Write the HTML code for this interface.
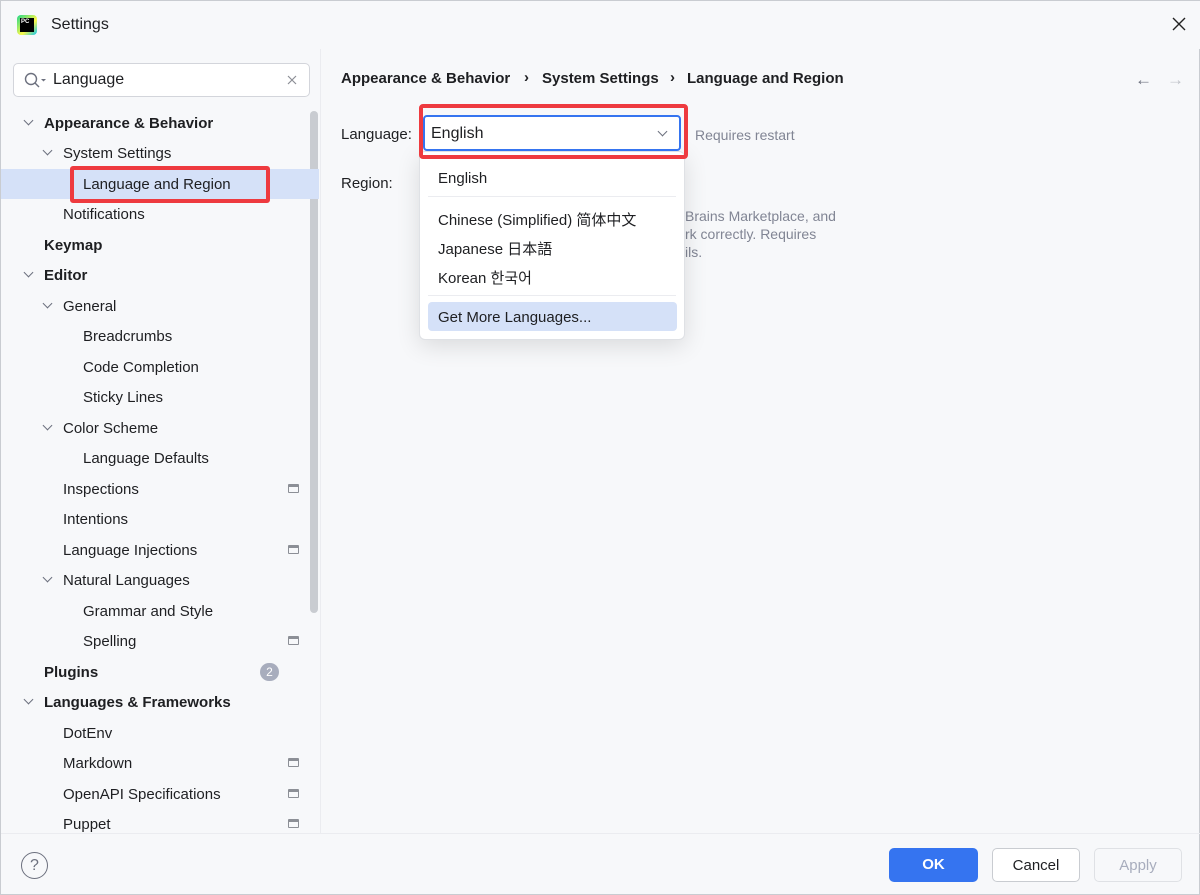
<!DOCTYPE html>
<html><head><style>
*{box-sizing:border-box;margin:0;padding:0}
body{width:1200px;height:895px;background:#f7f8fa;font-family:"Liberation Sans","Noto Sans CJK SC",sans-serif;font-size:15px;color:#1e1f22;position:relative;overflow:hidden;border:1px solid #c9ccd1}
.abs{position:absolute;white-space:nowrap}
.row{position:absolute;left:0;width:318px;height:30px;line-height:30px;white-space:nowrap}
.b{font-weight:bold}
.chev{position:absolute;width:7px;height:7px;border-right:1.3px solid #6c707e;border-bottom:1.3px solid #6c707e;transform:rotate(45deg)}
.ic{position:absolute;left:287px;width:11px;height:9px;border:1.3px solid #8c8f96;border-top-width:3px;border-radius:1px}
.btn{position:absolute;top:847px;height:34px;border-radius:5px;text-align:center;line-height:33px;font-size:15px}
</style></head><body>
<div class="abs" style="left:0;top:0;width:1200px;height:48px;background:#f7f8fa"></div>
<div class="abs" style="left:16px;top:14px;width:20px;height:20px;border-radius:4px;background:linear-gradient(135deg,#21d789,#fcf84a 60%,#07c3f2)"></div>
<div class="abs" style="left:19px;top:17px;width:14px;height:14px;background:#000;color:#fff;font-size:6px;font-weight:bold;padding:1px">PC</div>
<div class="abs" style="left:50px;top:15px;font-size:16px">Settings</div>
<svg class="abs" style="left:1171px;top:16px" width="14" height="14"><path d="M1 1L13 13M13 1L1 13" stroke="#222" stroke-width="1.4"/></svg>
<div class="abs" style="left:319px;top:48px;width:1px;height:784px;background:#ebecf0"></div>
<div class="abs" style="left:12px;top:62px;width:297px;height:34px;background:#fff;border:1px solid #d3d5db;border-radius:5px"></div>
<svg class="abs" style="left:22px;top:70px" width="24" height="18"><circle cx="8" cy="8" r="5.5" fill="none" stroke="#6c707e" stroke-width="1.4"/><path d="M12 12l4 4" stroke="#6c707e" stroke-width="1.4"/><path d="M18 8l2.5 2.5 2.5-2.5z" fill="#6c707e"/></svg>
<div class="abs" style="left:52px;top:70px;font-size:16px">Language</div>
<svg class="abs" style="left:286px;top:74px" width="10" height="10"><path d="M1 1L9 9M9 1L1 9" stroke="#8c8f96" stroke-width="1.2"/></svg>
<div class="abs" style="left:309px;top:110px;width:8px;height:502px;background:#c9ccd1;border-radius:4px"></div>
<div class="abs" style="left:0;top:168px;width:318px;height:30px;background:#d5e1f8"></div>
<div class="abs" style="left:69px;top:165px;width:200px;height:37px;border:4px solid #ee3a3f;border-radius:3px"></div>

<div class="row b" style="top:108px;left:43px">Appearance &amp; Behavior</div><div class="chev" style="left:24px;top:116px"></div>
<div class="row" style="top:138px;left:62px">System Settings</div><div class="chev" style="left:43px;top:146px"></div>
<div class="row" style="top:169px;left:82px">Language and Region</div>
<div class="row" style="top:199px;left:62px">Notifications</div>
<div class="row b" style="top:230px;left:43px">Keymap</div>
<div class="row b" style="top:260px;left:43px">Editor</div><div class="chev" style="left:24px;top:268px"></div>
<div class="row" style="top:291px;left:62px">General</div><div class="chev" style="left:43px;top:299px"></div>
<div class="row" style="top:321px;left:82px">Breadcrumbs</div>
<div class="row" style="top:352px;left:82px">Code Completion</div>
<div class="row" style="top:382px;left:82px">Sticky Lines</div>
<div class="row" style="top:413px;left:62px">Color Scheme</div><div class="chev" style="left:43px;top:421px"></div>
<div class="row" style="top:443px;left:82px">Language Defaults</div>
<div class="row" style="top:474px;left:62px">Inspections</div><div class="ic" style="top:483px"></div>
<div class="row" style="top:504px;left:62px">Intentions</div>
<div class="row" style="top:535px;left:62px">Language Injections</div><div class="ic" style="top:544px"></div>
<div class="row" style="top:565px;left:62px">Natural Languages</div><div class="chev" style="left:43px;top:573px"></div>
<div class="row" style="top:596px;left:82px">Grammar and Style</div>
<div class="row" style="top:626px;left:82px">Spelling</div><div class="ic" style="top:635px"></div>
<div class="row b" style="top:657px;left:43px">Plugins</div>
<div class="abs" style="left:259px;top:662px;width:19px;height:18px;border-radius:9px;background:#a8adbd;color:#fff;font-size:12px;text-align:center;line-height:18px">2</div>
<div class="row b" style="top:687px;left:43px">Languages &amp; Frameworks</div><div class="chev" style="left:24px;top:695px"></div>
<div class="row" style="top:718px;left:62px">DotEnv</div>
<div class="row" style="top:748px;left:62px">Markdown</div><div class="ic" style="top:757px"></div>
<div class="row" style="top:779px;left:62px">OpenAPI Specifications</div><div class="ic" style="top:788px"></div>
<div class="row" style="top:809px;left:62px">Puppet</div><div class="ic" style="top:818px"></div>

<div class="abs b" style="left:340px;top:69px;font-size:15px">Appearance &amp; Behavior</div>
<div class="abs b" style="left:523px;top:68px;font-size:15px">›</div>
<div class="abs b" style="left:541px;top:69px;font-size:15px">System Settings</div>
<div class="abs b" style="left:669px;top:68px;font-size:15px">›</div>
<div class="abs b" style="left:686px;top:69px;font-size:15px">Language and Region</div>
<div class="abs" style="left:1134px;top:69px;font-size:17px;color:#6c707e">←</div>
<div class="abs" style="left:1166px;top:69px;font-size:17px;color:#c0c3c9">→</div>

<div class="abs" style="left:340px;top:125px">Language:</div>
<div class="abs" style="left:340px;top:174px">Region:</div>
<div class="abs" style="left:694px;top:126px;font-size:14px;color:#818594">Requires restart</div>
<div class="abs" style="left:684px;top:206px;font-size:14px;color:#818594;line-height:18px">Brains Marketplace, and<br>rk correctly. Requires<br>ils.</div>

<div class="abs" style="left:418px;top:150px;width:266px;height:189px;background:#fff;border:1px solid #dfe1e5;border-radius:6px;box-shadow:0 6px 24px rgba(0,0,0,.12)"></div>
<div class="abs" style="left:437px;top:169px">English</div>
<div class="abs" style="left:427px;top:195px;width:248px;height:1px;background:#ebecf0"></div>
<div class="abs" style="left:437px;top:208px">Chinese (Simplified) 简体中文</div>
<div class="abs" style="left:437px;top:237px">Japanese 日本語</div>
<div class="abs" style="left:437px;top:266px">Korean 한국어</div>
<div class="abs" style="left:427px;top:294px;width:248px;height:1px;background:#ebecf0"></div>
<div class="abs" style="left:427px;top:301px;width:249px;height:29px;background:#d5e1f8;border-radius:4px"></div>
<div class="abs" style="left:437px;top:308px">Get More Languages...</div>

<div class="abs" style="left:422px;top:114px;width:258px;height:36px;background:#fff;border:2px solid #3574f0;border-radius:4px"></div>
<div class="abs" style="left:430px;top:124px;font-size:16px">English</div>
<div class="chev" style="left:658px;top:127px"></div>
<div class="abs" style="left:418px;top:103px;width:269px;height:55px;border:4px solid #ee3a3f;border-radius:4px"></div>

<div class="abs" style="left:0;top:832px;width:1200px;height:1px;background:#ebecf0"></div>
<div class="abs" style="left:20px;top:851px;width:27px;height:27px;border:1.3px solid #6c707e;border-radius:50%;text-align:center;line-height:25px;color:#6c707e;font-size:16px">?</div>
<div class="btn" style="left:888px;width:89px;background:#3574f0;color:#fff;font-weight:bold;line-height:34px">OK</div>
<div class="btn" style="left:991px;width:88px;background:#fff;border:1px solid #c9ccd1">Cancel</div>
<div class="btn" style="left:1093px;width:88px;border:1px solid #dfe1e5;color:#a8adbd">Apply</div>
</body></html>
